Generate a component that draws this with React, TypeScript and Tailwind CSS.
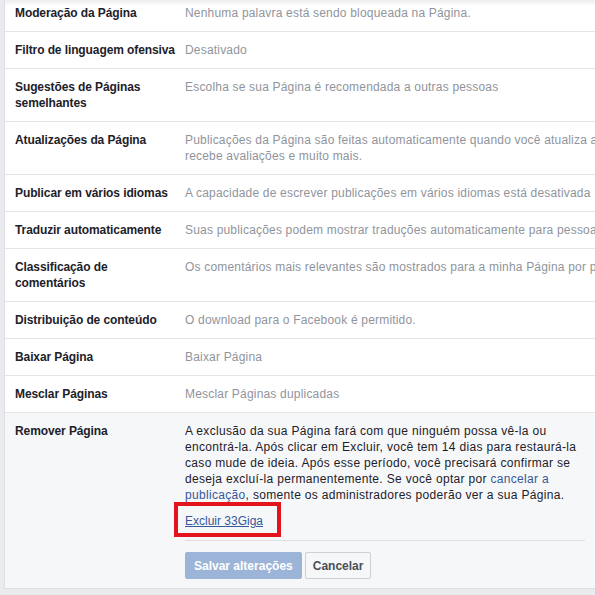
import React from "react";

const font = { fontFamily: '"Liberation Sans", Arial, Helvetica, sans-serif' };

type Row = { label: React.ReactNode; value: React.ReactNode; first?: boolean };

const rows: Row[] = [
  { label: "Moderação da Página", value: "Nenhuma palavra está sendo bloqueada na Página.", first: true },
  { label: "Filtro de linguagem ofensiva", value: "Desativado" },
  { label: <>Sugestões de Páginas<br />semelhantes</>, value: "Escolha se sua Página é recomendada a outras pessoas" },
  {
    label: "Atualizações da Página",
    value: <>Publicações da Página são feitas automaticamente quando você atualiza a sua Página,<br />recebe avaliações e muito mais.</>,
  },
  { label: "Publicar em vários idiomas", value: "A capacidade de escrever publicações em vários idiomas está desativada" },
  { label: "Traduzir automaticamente", value: "Suas publicações podem mostrar traduções automaticamente para pessoas que leem em outros idiomas." },
  { label: <>Classificação de<br />comentários</>, value: "Os comentários mais relevantes são mostrados para a minha Página por padrão." },
  { label: "Distribuição de conteúdo", value: "O download para o Facebook é permitido." },
  { label: "Baixar Página", value: "Baixar Página" },
  { label: "Mesclar Páginas", value: "Mesclar Páginas duplicadas" },
];

export default function App() {
  return (
    <div className="relative w-[595px] h-[595px] overflow-hidden bg-[#e9ebee] pl-[4px]" style={font}>
      <div className="w-[900px] bg-white border-l border-b border-[#dddfe2] text-[12px] leading-[16px]">
        {rows.map((r, i) => (
          <div
            key={i}
            className={`flex border-b border-[#e5e5e5] pl-[10px] pb-[10px] ${r.first ? "pt-[5px]" : "pt-[10px]"}`}
          >
            <div className="w-[170px] shrink-0 font-bold text-[#1d2129] whitespace-nowrap tracking-[-0.1px]">{r.label}</div>
            <div className="text-[#90949c] whitespace-nowrap tracking-[0.19px]">{r.value}</div>
          </div>
        ))}
        <div className="flex bg-[#f6f7f9] pl-[10px] pt-[10px] pb-[9px]">
          <div className="w-[170px] shrink-0 font-bold text-[#1d2129] whitespace-nowrap tracking-[-0.1px]">Remover Página</div>
          <div className="w-[400px] shrink-0 text-[#1d2129]">
            <div className="whitespace-nowrap text-[12px] leading-[16px] tracking-[0.32px]">
              A exclusão da sua Página fará com que ninguém possa vê-la ou
              <br />
              encontrá-la. Após clicar em Excluir, você tem 14 dias para restaurá-la
              <br />
              caso mude de ideia. Após esse período, você precisará confirmar se
              <br />
              deseja excluí-la permanentemente. Se você optar por{" "}
              <span className="text-[#365899]">cancelar a</span>
              <br />
              <span className="text-[#365899]">publicação</span>, somente os administradores poderão ver a sua Página.
            </div>
            <div className="mt-[10px]">
              <span className="relative inline-block">
                <span className="text-[#365899] underline">Excluir 33Giga</span>
                <span className="absolute -left-[11px] -top-[11px] w-[107px] h-[35px] border-[4px] border-[#e3141c]" />
              </span>
            </div>
            <div className="mt-[11px] h-px bg-[#dddfe2]" />
            <div className="mt-[11px] flex gap-[3px]">
              <button className="h-[27px] px-[8px] rounded-[2px] bg-[#9cb4d8] border border-[#9cb4d8] text-white font-bold text-[12px]">
                Salvar alterações
              </button>
              <button className="h-[27px] px-[7px] rounded-[2px] bg-[#f6f7f9] border border-[#ced0d4] text-[#4b4f56] font-bold text-[12px]">
                Cancelar
              </button>
            </div>
          </div>
        </div>
      </div>
      <div className="absolute top-0 left-[5px] right-0 h-[6px] bg-gradient-to-b from-[#00000012] to-transparent" />
    </div>
  );
}
